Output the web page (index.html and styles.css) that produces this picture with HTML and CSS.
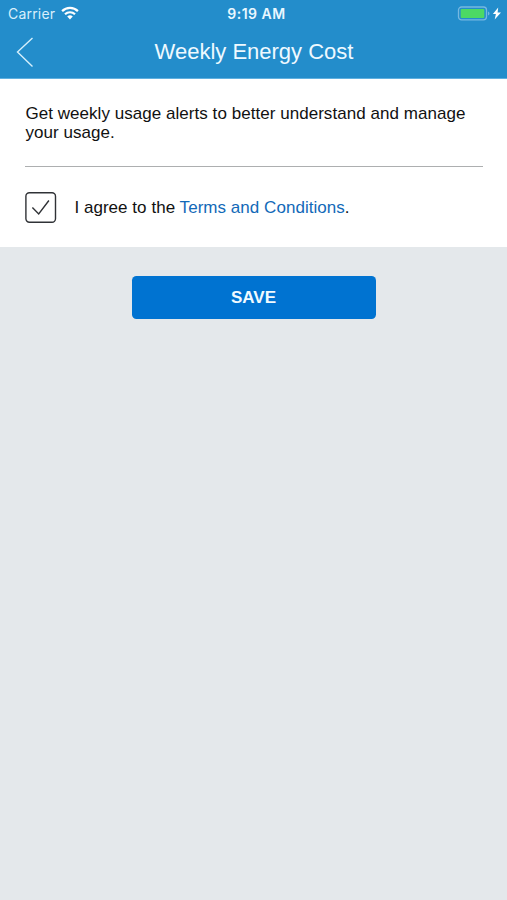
FILE: index.html
```html
<!DOCTYPE html>
<html lang="en">
<head>
<meta charset="utf-8">
<title>Weekly Energy Cost</title>
<link rel="stylesheet" href="styles.css">
</head>
<body>
<header class="header">
  <div class="status">
    <div class="status-left">
      <span class="carrier">Carrier</span>
      <svg class="wifi" width="18" height="14" viewBox="0 0 18 14" fill="none" stroke="#fff" stroke-width="2.2">
        <path d="M1.100 5.100a11.200 11.200 0 0 1 15.800 0M4 8.300a7.100 7.100 0 0 1 10 0"/>
        <path d="M9 13.400l-2.800-2.800a4 4 0 0 1 5.600 0z" fill="#fff" stroke="none"/>
      </svg>
    </div>
    <span class="time">9:19 AM</span>
    <svg class="battery" width="45" height="16" viewBox="0 0 45 16">
      <rect x="1.500" y="1" width="28" height="12.800" rx="3" fill="none" stroke="#76b8e1" stroke-width="1.300"/>
      <rect x="3.700" y="3" width="23.600" height="9" rx="1" fill="#4cd964"/>
      <path d="M31 5.500v4c2-.7 2-3.300 0-4z" fill="#76b8e1"/>
      <path d="M41.200 1.600l-5.300 6.500h3l-1.200 5.500 6.300-7.200h-3.400z" fill="#fff"/>
    </svg>
  </div>
  <div class="nav">
    <svg class="back" width="20" height="32" viewBox="0 0 20 32" fill="none" stroke="#d5effc" stroke-width="1.400">
      <path d="M16.500 2L1.500 16l15 14.500"/>
    </svg>
    <h1 class="title">Weekly Energy Cost</h1>
  </div>
</header>
<main>
  <section class="card">
    <p class="intro">Get weekly usage alerts to better understand and manage your usage.</p>
    <div class="agree">
      <svg class="check" width="32" height="32" viewBox="0 0 32 32" fill="none" stroke="#303236">
        <rect x=".9" y=".7" width="29.600" height="29.600" rx="3.500" stroke-width="1.400"/>
        <path d="M7.400 15.400l6.300 6.500L23.900 8.500" stroke-width="1.400"/>
      </svg>
      <span class="terms">I agree to the <a class="link">Terms and Conditions</a>.</span>
    </div>
  </section>
  <button class="save">SAVE</button>
</main>
</body>
</html>
```
FILE: styles.css
```css
* { box-sizing: border-box; }

body {
  margin: 0;
  min-height: 900px;
  background: #e4e8eb;
  color: #111;
  font-family: "Liberation Sans", Arial, sans-serif;
}

.header {
  height: 79px;
  background: #238dcb;
  border-bottom: 1px solid #5fb0e0;
  color: #fff;
}

.status {
  display: grid;
  grid-template-columns: 1fr auto 1fr;
  height: 27px;
  padding: 0 5px 0 8px;
  align-items: center;
}

.status-left {
  display: flex;
  align-items: center;
  gap: 6px;
}

.carrier {
  color: #d9effb;
  font: 14px/20px Inter, sans-serif;
  letter-spacing: 0.2px;
}

.wifi { margin-top: -1px; }

.time {
  padding-left: 3px;
  color: #e9f7ff;
  font: 600 14px/20px Inter, sans-serif;
  letter-spacing: 0.5px;
}

.battery { justify-self: end; }

.nav {
  display: grid;
  grid-template-columns: 38px 1fr 38px;
  height: 50px;
  align-items: center;
}

.back { margin-left: 16px; }

.title {
  margin: 0;
  padding-left: 1px;
  color: #eef9ff;
  font-size: 22px;
  font-weight: 400;
  line-height: 28px;
  text-align: center;
}

.card {
  height: 168px;
  padding: 25px 24.5px 0 25.4px;
  background: #fff;
}

.intro {
  height: 63px;
  margin: 0;
  border-bottom: 1px solid #adafb0;
  font-size: 17px;
  line-height: 19px;
  letter-spacing: 0.045px;
}

.agree {
  display: flex;
  align-items: center;
  gap: 17px;
  margin-top: 25px;
}

.terms {
  font-size: 17px;
  line-height: 20px;
  letter-spacing: 0.04px;
}

.link { color: #1269b8; }

.save {
  display: block;
  width: 244px;
  height: 43px;
  margin: 29px auto 0;
  padding: 0;
  border: 0;
  border-radius: 4.5px;
  background: #0073d1;
  color: #f0faff;
  font: bold 17px/20px "Liberation Sans", Arial, sans-serif;
}
```
